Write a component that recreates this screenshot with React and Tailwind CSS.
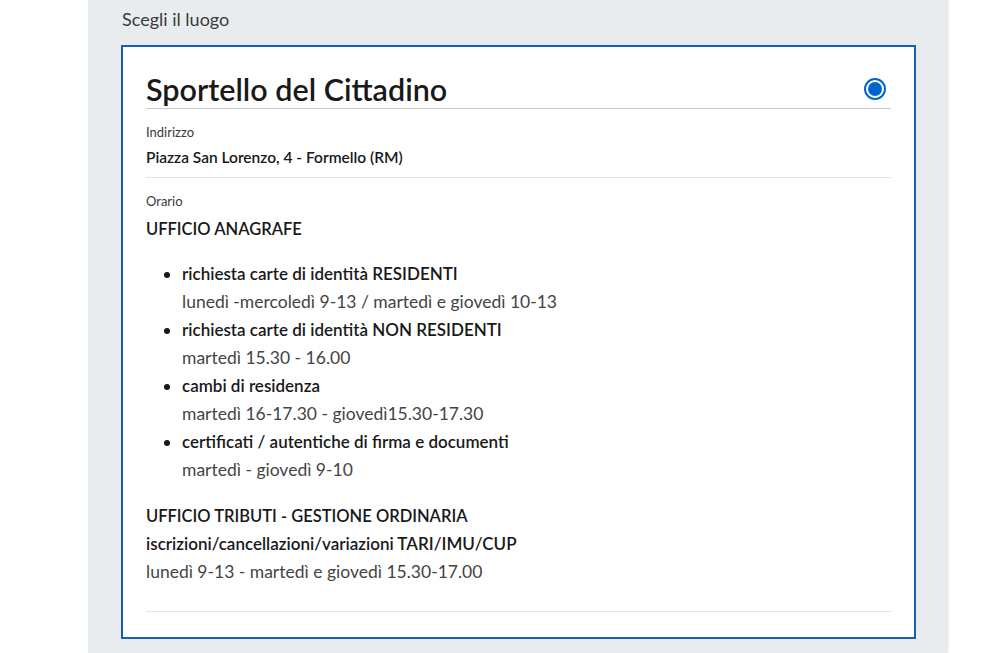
import React from 'react';

const items = [
  { title: 'richiesta carte di identità RESIDENTI', hours: 'lunedì -mercoledì  9-13 / martedì e giovedì 10-13' },
  { title: 'richiesta carte di identità NON RESIDENTI', hours: 'martedì 15.30 - 16.00' },
  { title: 'cambi di residenza', hours: 'martedì 16-17.30 - giovedì15.30-17.30' },
  { title: 'certificati / autentiche di firma e documenti', hours: 'martedì - giovedì 9-10' },
];

export default function App() {
  return (
    <div className="w-[999px] h-[653px] bg-white overflow-hidden text-[#19191a]" style={{ fontFamily: 'Lato, "Open Sans", sans-serif' }}>
      <div className="ml-[88px] w-[860px] h-full bg-[#e9ecef] px-[33px] pt-[7px] shadow-[1px_0_2px_rgba(0,0,0,0.06)]">
        <div className="ml-px text-[18px] font-normal leading-[24px] text-[#3a3a3a]">Scegli il luogo</div>

        <div className="mt-[14px] w-[795px] border-2 border-[#1a5fac] bg-white px-[23px] pt-[24px] pb-[25px]">
          <div className="flex items-center justify-between border-b border-[#c5c7c9] pb-[1px]">
            <h2 className="text-[30.5px] font-semibold leading-[36px] text-[#19191a]">Sportello del Cittadino</h2>
            <span className="mr-[5px] flex h-[22px] w-[22px] items-center justify-center rounded-full border-2 border-[#0066cc]">
              <span className="h-[14px] w-[14px] rounded-full bg-[#0066cc]" />
            </span>
          </div>

          <div className="border-b border-[#e3e4e6] pt-[14px] pb-[10px]">
            <div className="text-[13px] font-normal leading-[18px] text-[#3a3a3a]">Indirizzo</div>
            <div className="mt-[6px] text-[15.5px] font-semibold leading-[20px]">Piazza San Lorenzo, 4 - Formello (RM)</div>
          </div>

          <div className="border-b border-[#e3e4e6] pt-[14px] pb-[25px]">
            <div className="text-[13px] font-normal leading-[18px] text-[#3a3a3a]">Orario</div>
            <div className="mt-[7px] text-[16.5px] font-semibold leading-[24px]">UFFICIO ANAGRAFE</div>
            <ul className="mt-[19px] ml-[36px] list-disc text-[17px] leading-[28px]">
              {items.map((it) => (
                <li key={it.title} className="marker:text-[#19191a]">
                  <div className="font-semibold">{it.title}</div>
                  <div className="text-[17.5px] font-normal text-[#444]">{it.hours}</div>
                </li>
              ))}
            </ul>
            <div className="mt-[18px] text-[17px] leading-[28px]">
              <div className="text-[16.5px] font-semibold">UFFICIO TRIBUTI - GESTIONE ORDINARIA</div>
              <div className="font-semibold">iscrizioni/cancellazioni/variazioni TARI/IMU/CUP</div>
              <div className="text-[17.5px] font-normal text-[#444]">lunedì 9-13 - martedì e giovedì 15.30-17.00</div>
            </div>
          </div>
        </div>
      </div>
    </div>
  );
}
